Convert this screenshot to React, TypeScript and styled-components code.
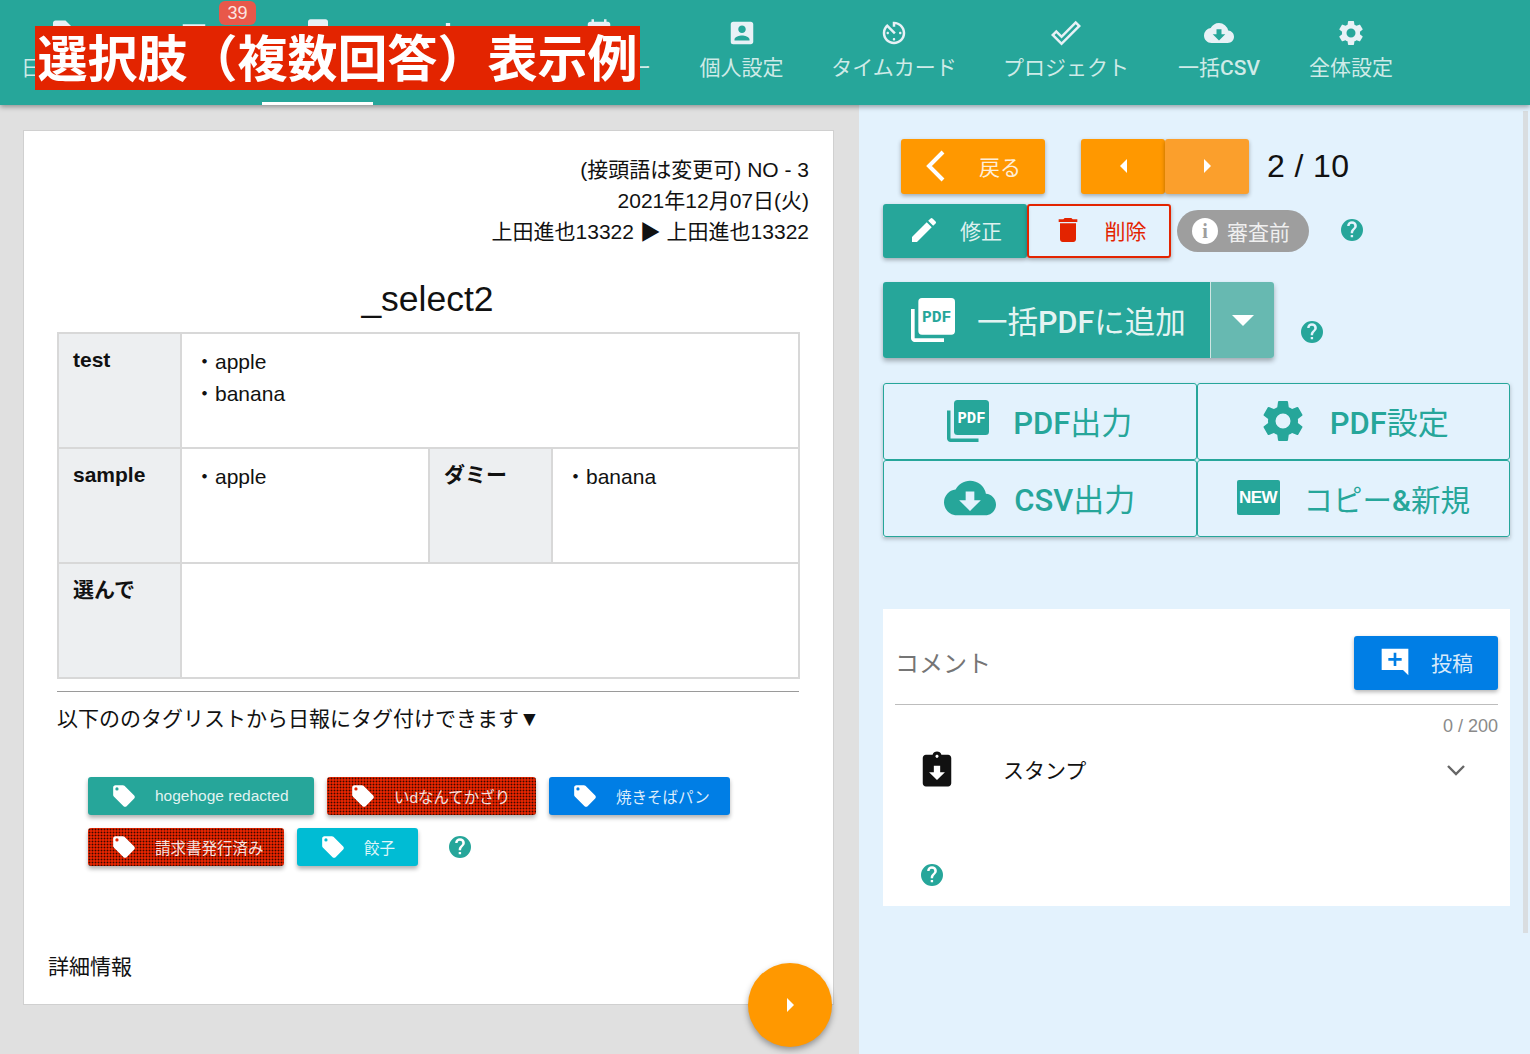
import React from "react";
import styled, { createGlobalStyle } from "styled-components";

const TEAL = "#26a69a";
const ORANGE = "#ff9800";
const RED = "#e32400";
const BLUE = "#007ee5";
const ICON = "#e8f1f6";
const CJK = `"Liberation Sans", "Noto Sans CJK JP", sans-serif`;

const GlobalStyle = createGlobalStyle`
  html, body {
    margin: 0;
    padding: 0;
    height: 100%;
    overflow: hidden;
    font-family: ${CJK};
    color: #111;
  }
  * { box-sizing: border-box; }
`;

const Glyph = ({ size, color, d }: { size: number; color: string; d: string }) => (
  <svg width={size} height={size} viewBox="0 0 24 24">
    <path fill={color} d={d} />
  </svg>
);

const SolidPdf = ({ size, color, knock }: { size: number; color: string; knock: string }) => (
  <svg width={size} height={size} viewBox="0 0 24 24">
    <path fill={color} d="M2 6H0v16c0 1.100.9 2 2 2h16v-2H2V6z" />
    <rect x="4" y="0" width="20" height="20" rx="2" fill={color} />
    <text x="14" y="13" fontSize="9" fontWeight="700" textAnchor="middle" textLength="16" lengthAdjust="spacingAndGlyphs" fill={knock} fontFamily="Liberation Mono, monospace">PDF</text>
  </svg>
);

const GEAR = "M19.14 12.94c.04-.3.06-.61.06-.94s-.02-.64-.07-.94l2.03-1.58a.5.5 0 0 0 .12-.61l-1.92-3.32a.5.5 0 0 0-.59-.22l-2.39.96a7 7 0 0 0-1.62-.94l-.36-2.54a.48.48 0 0 0-.48-.41h-3.84a.47.47 0 0 0-.47.41l-.36 2.54c-.59.24-1.13.57-1.62.94l-2.39-.96a.5.5 0 0 0-.59.22L2.74 8.87a.48.48 0 0 0 .12.61l2.03 1.58c-.05.3-.09.63-.09.94s.02.64.07.94l-2.03 1.58a.5.5 0 0 0-.12.61l1.92 3.32c.12.22.37.29.59.22l2.39-.96c.5.38 1.03.7 1.62.94l.36 2.54c.05.24.24.41.48.41h3.84c.24 0 .44-.17.47-.41l.36-2.54c.59-.24 1.13-.56 1.62-.94l2.39.96c.22.08.47 0 .59-.22l1.92-3.32a.47.47 0 0 0-.12-.61l-2.01-1.58zM12 15.6a3.6 3.6 0 1 1 0-7.2 3.6 3.6 0 0 1 0 7.2z";
const CLOUD = "M19.35 10.04A7.49 7.49 0 0 0 12 4C9.11 4 6.6 5.64 5.35 8.04A5.994 5.994 0 0 0 0 14c0 3.31 2.69 6 6 6h13c2.76 0 5-2.24 5-5 0-2.64-2.05-4.78-4.65-4.96zM17 13l-5 5-5-5h3V9h4v4h3z";
const ACCOUNT = "M3 5v14a2 2 0 0 0 2 2h14c1.100 0 2-.9 2-2V5c0-1.100-.9-2-2-2H5a2 2 0 0 0-2 2zm12 4c0 1.660-1.340 3-3 3s-3-1.340-3-3 1.340-3 3-3 3 1.340 3 3zm-9 8c0-2 4-3.100 6-3.100s6 1.100 6 3.100v1H6v-1z";
const TIMER = "M11 17c0 .55.45 1 1 1s1-.45 1-1-.45-1-1-1-1 .45-1 1zm0-14v4h2V5.080c3.390.490 6 3.390 6 6.920 0 3.870-3.130 7-7 7s-7-3.130-7-7c0-1.680.590-3.220 1.580-4.420L12 13l1.410-1.410-6.800-6.800v.020C4.420 6.450 3 9.050 3 12c0 4.970 4.020 9 9 9 4.970 0 9-4.030 9-9s-4.030-9-9-9h-1zm7 9c0-.55-.45-1-1-1s-1 .45-1 1 .45 1 1 1 1-.45 1-1zM6 12c0 .55.45 1 1 1s1-.45 1-1-.45-1-1-1-1 .45-1 1z";
const DONE = "M19.77 5.030l1.400 1.400L8.430 19.170l-5.600-5.600 1.400-1.400 4.200 4.200L19.770 5.03m0-2.830L8.43 13.540l-4.200-4.200L0 13.570 8.430 22 24 6.430 19.770 2.200z";
const FILE = "M14 2H6c-1.100 0-2 .9-2 2v16c0 1.100.9 2 2 2h12c1.100 0 2-.9 2-2V8l-6-6z";
const LIST = "M3 5h18v14H3z";
const BOARD = "M6 1h12c1.100 0 2 .9 2 2v18c0 1.100-.9 2-2 2H6c-1.100 0-2-.9-2-2V3c0-1.100.9-2 2-2z";
const BARS = "M10.300 4h3.400v16h-3.400z";
const CALENDAR = "M19 3h-1V1h-2v2H8V1H6v2H5c-1.110 0-1.990.9-1.990 2L3 19a2 2 0 0 0 2 2h14c1.100 0 2-.9 2-2V5c0-1.100-.9-2-2-2z";

const TagIcon = ({ knock }: { knock: string }) => (
  <svg width="26" height="26" viewBox="0 0 24 24">
    <path
      fill="#fff"
      d="M21.41 11.58l-9-9C12.05 2.22 11.55 2 11 2H4c-1.1 0-2 .9-2 2v7c0 .55.22 1.05.59 1.42l9 9c.36.36.86.58 1.41.58s1.05-.22 1.41-.59l7-7c.37-.36.59-.86.59-1.41s-.23-1.06-.59-1.42z"
    />
    <circle cx="5.5" cy="5.5" r="1.5" fill={knock} />
  </svg>
);

const Help = ({ size = 22 }: { size?: number }) => (
  <svg width={size} height={size} viewBox="0 0 24 24">
    <path
      fill={TEAL}
      d="M12 0a12 12 0 1 0 0 24 12 12 0 0 0 0-24zm1.2 20h-2.6v-2.6h2.6V20zm2.7-9.3l-1.2 1.2c-1 1-1.5 1.8-1.5 3.6h-2.6v-.7c0-1.4.5-2.7 1.5-3.7l1.6-1.6c.5-.5.8-1.1.8-1.8a2.6 2.6 0 0 0-5.2 0H6.7a5.3 5.3 0 0 1 10.6 0c0 1.200-.5 2.200-1.400 3z"
    />
  </svg>
);

const Header = styled.header`
  position: relative;
  z-index: 2;
  height: 105px;
  background: ${TEAL};
  box-shadow: 0 2px 5px rgba(0, 0, 0, 0.35);
`;

const Nav = styled.nav`
  display: flex;
  height: 100%;
`;

const Tab = styled.div<{ $width: number; $active?: boolean }>`
  position: relative;
  flex: none;
  width: ${(p) => p.$width}px;
  padding-top: 18px;
  display: flex;
  flex-direction: column;
  align-items: center;
  gap: 8px;
  color: rgba(255, 255, 255, 0.78);
  font-size: 21px;
  line-height: 24px;
  white-space: nowrap;
  border-bottom: ${(p) => (p.$active ? "3px solid #fff" : "none")};
`;

const TabIcon = styled.div`
  width: 30px;
  height: 30px;
  display: flex;
  align-items: center;
  justify-content: center;
`;

const Latin = styled.span`
  font-family: Roboto, sans-serif;
  font-weight: 500;
`;

const Badge = styled.span`
  position: absolute;
  top: 1px;
  left: 93px;
  width: 37px;
  height: 24px;
  border-radius: 6px;
  background: #e8584a;
  color: rgba(255, 255, 255, 0.85);
  font-size: 18px;
  line-height: 24px;
  text-align: center;
`;

const Banner = styled.div`
  position: absolute;
  left: 35px;
  top: 26px;
  width: 605px;
  height: 64px;
  background: ${RED};
  color: #fff;
  font-size: 50px;
  font-weight: 700;
  line-height: 68px;
  text-align: center;
  white-space: nowrap;
  overflow: hidden;
`;

const Body = styled.div`
  display: flex;
  height: 949px;
`;

const Left = styled.main`
  position: relative;
  width: 859px;
  flex: none;
  padding: 25px 25px 0 23px;
  background: #e0e0e0;
`;

const Sheet = styled.section`
  height: 875px;
  padding: 23px 24px 0 33px;
  background: #fff;
  border: 1px solid #d0d0d0;
`;

const MetaLine = styled.div`
  text-align: right;
  font-size: 21px;
  line-height: 31px;
`;

const Title = styled.h1`
  margin: 30px 0 11px;
  text-align: center;
  font-size: 35.5px;
  line-height: 44px;
  font-weight: 400;
  padding-right: 11px;
`;

const Report = styled.table`
  width: 741px;
  height: 347px;
  border-collapse: collapse;
  table-layout: fixed;
  font-size: 21px;
`;

const Column = styled.col<{ $width: number }>`
  width: ${(p) => p.$width}px;
`;

const Th = styled.th`
  height: 115px;
  padding: 14px 14px 0;
  vertical-align: top;
  text-align: left;
  line-height: 24px;
  background: #edeff1;
  border: 2px solid #d8d8d8;
`;

const Td = styled.td`
  padding: 12px 12px 0;
  vertical-align: top;
  border: 2px solid #d8d8d8;
`;

const Choice = styled.div`
  line-height: 32px;
`;

const Rule = styled.hr`
  width: 742px;
  margin: 12px 0 0;
  border: none;
  border-top: 1px solid #9a9a9a;
`;

const TagHint = styled.p`
  margin: 14px 0 0;
  font-size: 21px;
  line-height: 26px;
`;

const TagList = styled.div`
  display: flex;
  flex-wrap: wrap;
  align-items: center;
  gap: 13px;
  width: 660px;
  margin: 45px 0 0 31px;
`;

const TagButton = styled.div<{ $width: number; $color: string; $dotted?: boolean }>`
  width: ${(p) => p.$width}px;
  height: 38px;
  display: flex;
  align-items: center;
  gap: 18px;
  padding: 0 0 1px 23px;
  border-radius: 3px;
  background-color: ${(p) => p.$color};
  background-image: ${(p) =>
    p.$dotted ? "radial-gradient(rgba(0, 0, 0, 0.75) 0.8px, transparent 1.1px)" : "none"};
  background-size: 3px 3px;
  color: rgba(255, 255, 255, 0.88);
  font-size: 15.5px;
  white-space: nowrap;
  box-shadow: 0 3px 4px rgba(0, 0, 0, 0.3);
`;

const TagHelp = styled.div`
  display: flex;
  margin-left: 18px;
`;

const Details = styled.div`
  margin: 88px 0 0 -9px;
  font-size: 21px;
  line-height: 26px;
`;

const Fab = styled.div`
  position: absolute;
  left: 748px;
  top: 858px;
  width: 84px;
  height: 84px;
  display: flex;
  align-items: center;
  justify-content: center;
  border-radius: 50%;
  background: ${ORANGE};
  box-shadow: 0 3px 6px rgba(0, 0, 0, 0.35);
`;

const Caret = styled.span<{ $dir: "left" | "right" | "down"; $size: number }>`
  width: 0;
  height: 0;
  border-style: solid;
  border-color: transparent;
  border-width: ${(p) => p.$size}px;
  ${(p) =>
    p.$dir === "left"
      ? `border-left-width: 0; border-right-color: #fff;`
      : p.$dir === "right"
        ? `border-right-width: 0; border-left-color: #fff;`
        : `border-bottom-width: 0; border-top-color: #fff;`}
`;

const Right = styled.aside`
  position: relative;
  flex: 1;
  padding: 34px 20px 0 24px;
  background: #e3f2fd;
`;

const ScrollThumb = styled.div`
  position: absolute;
  top: 6px;
  right: 2px;
  width: 5px;
  height: 822px;
  background: #d9dde0;
`;

const PagerRow = styled.div`
  display: flex;
  align-items: center;
  height: 55px;
  margin-left: 18px;
`;

const FlatButton = styled.div<{ $width: number; $height?: number; $bg?: string; $fg?: string; $outline?: string; $gap?: number }>`
  width: ${(p) => p.$width}px;
  height: ${(p) => p.$height ?? 54}px;
  flex: none;
  display: flex;
  align-items: center;
  justify-content: center;
  gap: ${(p) => p.$gap ?? 0}px;
  padding-bottom: 2px;
  background: ${(p) => p.$bg ?? "transparent"};
  color: ${(p) => p.$fg ?? "rgba(255, 255, 255, 0.85)"};
  border: ${(p) => (p.$outline ? `2px solid ${p.$outline}` : "none")};
  border-radius: 3px;
  font-size: 21px;
  white-space: nowrap;
  box-shadow: 0 2px 4px rgba(0, 0, 0, 0.3);
`;

const ArrowGroup = styled.div`
  display: flex;
  margin-left: 36px;
`;

const PageCount = styled.span`
  margin-left: 18px;
  font-size: 32px;
  letter-spacing: 0.4px;
`;

const ActionRow = styled.div`
  display: flex;
  align-items: center;
  margin-top: 10px;
`;

const StatusPill = styled.div`
  width: 132px;
  height: 42px;
  margin-left: 6px;
  display: flex;
  align-items: center;
  gap: 9px;
  padding-left: 15px;
  border-radius: 21px;
  background: #9e9e9e;
  color: rgba(255, 255, 255, 0.85);
  font-size: 21px;
`;

const InfoDot = styled.span`
  width: 26px;
  height: 26px;
  border-radius: 50%;
  background: #fff;
  color: #9e9e9e;
  font-family: "Liberation Serif", serif;
  font-weight: 700;
  font-size: 20px;
  line-height: 26px;
  text-align: center;
`;

const HelpSlot = styled.div<{ $left: number; $top?: number }>`
  display: flex;
  margin-left: ${(p) => p.$left}px;
  margin-top: ${(p) => p.$top ?? 0}px;
`;

const BulkRow = styled.div`
  display: flex;
  align-items: center;
  margin-top: 24px;
`;

const BulkButton = styled.div`
  display: flex;
  height: 76px;
  border-radius: 3px;
  color: rgba(255, 255, 255, 0.9);
  box-shadow: 0 3px 5px rgba(0, 0, 0, 0.3);
  overflow: hidden;
`;

const BulkMain = styled.div`
  width: 327px;
  display: flex;
  align-items: center;
  gap: 22px;
  padding-left: 28px;
  background: ${TEAL};
  font-size: 30.500px;
`;

const BulkCaret = styled.div`
  width: 64px;
  display: flex;
  align-items: center;
  justify-content: center;
  background: #67b9b1;
  border-left: 1px solid #cfe6e3;
`;

const OutputGrid = styled.div`
  display: grid;
  grid-template-columns: repeat(2, 1fr);
  width: 627px;
  margin-top: 25px;
  box-shadow: 0 2px 4px rgba(0, 0, 0, 0.25);
`;

const OutputCell = styled.div<{ $gap: number }>`
  height: 77px;
  display: flex;
  align-items: center;
  justify-content: center;
  gap: ${(p) => p.$gap}px;
  padding-bottom: 2px;
  border: 1.5px solid ${TEAL};
  border-radius: 3px;
  color: ${TEAL};
  font-size: 31px;
`;

const CellLabel = styled.span<{ $size?: number }>`
  font-size: ${(p) => p.$size ?? 31}px;
  white-space: nowrap;
`;

const NewMark = styled.span`
  width: 43px;
  height: 35px;
  display: flex;
  align-items: center;
  justify-content: center;
  border-radius: 2px;
  background: ${TEAL};
  color: #fff;
  font-size: 17px;
  font-weight: 700;
  letter-spacing: -0.5px;
  font-family: "Liberation Sans", sans-serif;
`;

const CommentCard = styled.section`
  width: 627px;
  height: 297px;
  margin-top: 72px;
  padding: 27px 12px 0;
  background: #fff;
`;

const CommentHead = styled.div`
  display: flex;
  align-items: center;
  justify-content: space-between;
  height: 69px;
  padding-bottom: 14px;
  border-bottom: 1px solid #bdbdbd;
  color: #757575;
  font-size: 24px;
`;

const CommentLabel = styled.span`
  padding-bottom: 4px;
`;

const Counter = styled.div`
  margin-top: 10px;
  text-align: right;
  color: #8a8a8a;
  font-size: 18px;
  line-height: 22px;
`;

const StampRow = styled.div`
  display: flex;
  align-items: center;
  margin: 10px 0 0 23px;
  height: 44px;
  font-size: 21px;
`;

const StampLabel = styled.span`
  flex: 1;
  margin-left: 47px;
`;

const StampChevron = styled.svg`
  margin: 3px 32px 0 0;
`;

const CommentHelp = styled.div`
  display: flex;
  margin: 73px 0 0 26px;
`;

const tabs = [
  { width: 126, icon: <Glyph size={36} color={ICON} d={FILE} />, label: "日報作成" },
  { width: 136, icon: <Glyph size={36} color={ICON} d={LIST} />, badge: "39" },
  { width: 111, icon: <Glyph size={36} color={ICON} d={BOARD} />, active: true },
  { width: 149, icon: <Glyph size={36} color={ICON} d={BARS} /> },
  { width: 153, icon: <Glyph size={36} color={ICON} d={CALENDAR} />, label: "カレンダー" },
  { width: 133, icon: <Glyph size={36} color={ICON} d={ACCOUNT} />, label: "個人設定" },
  { width: 172, icon: <Glyph size={36} color={ICON} d={TIMER} />, label: "タイムカード" },
  { width: 172, icon: <Glyph size={36} color={ICON} d={DONE} />, label: "プロジェクト" },
  { width: 134, icon: <Glyph size={38} color={ICON} d={CLOUD} />, label: <span>一括<Latin>CSV</Latin></span> },
  { width: 130, icon: <Glyph size={36} color={ICON} d={GEAR} />, label: "全体設定" },
];

const tags = [
  { label: "hogehoge redacted", width: 226, color: TEAL },
  { label: "いdなんてかざり", width: 209, color: RED, dotted: true },
  { label: "焼きそばパン", width: 181, color: BLUE },
  { label: "請求書発行済み", width: 196, color: RED, dotted: true },
  { label: "餃子", width: 121, color: "#00bcd4" },
];

export default function App() {
  return (
    <>
      <GlobalStyle />
      <Header>
        <Nav>
          {tabs.map((tab, i) => (
            <Tab key={i} $width={tab.width} $active={tab.active}>
              {tab.badge && <Badge>{tab.badge}</Badge>}
              <TabIcon>{tab.icon}</TabIcon>
              {tab.label}
            </Tab>
          ))}
        </Nav>
        <Banner>選択肢（複数回答）表示例</Banner>
      </Header>
      <Body>
        <Left>
          <Sheet>
            <MetaLine>(接頭語は変更可) NO - 3</MetaLine>
            <MetaLine>2021年12月07日(火)</MetaLine>
            <MetaLine>上田進也13322 ▶ 上田進也13322</MetaLine>
            <Title>_select2</Title>
            <Report>
              <colgroup>
                <Column $width={123} />
                <Column $width={248} />
                <Column $width={123} />
                <Column $width={247} />
              </colgroup>
              <tbody>
                <tr>
                  <Th>test</Th>
                  <Td colSpan={3}>
                    <Choice>・apple</Choice>
                    <Choice>・banana</Choice>
                  </Td>
                </tr>
                <tr>
                  <Th>sample</Th>
                  <Td><Choice>・apple</Choice></Td>
                  <Th>ダミー</Th>
                  <Td><Choice>・banana</Choice></Td>
                </tr>
                <tr>
                  <Th>選んで</Th>
                  <Td colSpan={3} />
                </tr>
              </tbody>
            </Report>
            <Rule />
            <TagHint>以下ののタグリストから日報にタグ付けできます▼</TagHint>
            <TagList>
              {tags.map((tag) => (
                <TagButton key={tag.label} $width={tag.width} $color={tag.color} $dotted={tag.dotted}>
                  <TagIcon knock={tag.color} />
                  {tag.label}
                </TagButton>
              ))}
              <TagHelp><Help /></TagHelp>
            </TagList>
            <Details>詳細情報</Details>
          </Sheet>
          <Fab><Caret $dir="right" $size={7} /></Fab>
        </Left>
        <Right>
          <ScrollThumb />
          <PagerRow>
            <FlatButton $width={144} $height={55} $bg={ORANGE} $gap={34}>
              <svg width="20" height="32" viewBox="0 0 20 32">
                <path d="M18 2L4 16l14 14" fill="none" stroke="#fff" strokeWidth="4" />
              </svg>
              戻る
            </FlatButton>
            <ArrowGroup>
              <FlatButton $width={84} $height={55} $bg={ORANGE}><Caret $dir="left" $size={7} /></FlatButton>
              <FlatButton $width={84} $height={55} $bg="#fb9f2c"><Caret $dir="right" $size={7} /></FlatButton>
            </ArrowGroup>
            <PageCount>2 / 10</PageCount>
          </PagerRow>
          <ActionRow>
            <FlatButton $width={144} $bg={TEAL} $gap={20}>
              <svg width="32" height="32" viewBox="0 0 24 24">
                <path fill="#fff" d="M3 17.25V21h3.75L17.81 9.94l-3.75-3.75L3 17.250zM20.710 7.040a1 1 0 0 0 0-1.410l-2.340-2.340a1 1 0 0 0-1.410 0l-1.830 1.830 3.750 3.750 1.830-1.830z" />
              </svg>
              修正
            </FlatButton>
            <FlatButton $width={144} $fg={RED} $outline={RED} $gap={21}>
              <svg width="32" height="32" viewBox="0 0 24 24">
                <path fill={RED} d="M6 19c0 1.100.9 2 2 2h8c1.100 0 2-.9 2-2V7H6v12zM19 4h-3.500l-1-1h-5l-1 1H5v2h14V4z" />
              </svg>
              削除
            </FlatButton>
            <StatusPill><InfoDot>i</InfoDot>審査前</StatusPill>
            <HelpSlot $left={32} $top={-2}><Help /></HelpSlot>
          </ActionRow>
          <BulkRow>
            <BulkButton>
              <BulkMain>
                <SolidPdf size={44} color="#fff" knock={TEAL} />
                <span>一括<Latin>PDF</Latin>に追加</span>
              </BulkMain>
              <BulkCaret><Caret $dir="down" $size={11} /></BulkCaret>
            </BulkButton>
            <HelpSlot $left={27} $top={24}><Help /></HelpSlot>
          </BulkRow>
          <OutputGrid>
            <OutputCell $gap={24}>
              <SolidPdf size={42} color={TEAL} knock="#fff" />
              <CellLabel><Latin>PDF</Latin>出力</CellLabel>
            </OutputCell>
            <OutputCell $gap={22}>
              <Glyph size={50} color={TEAL} d={GEAR} />
              <CellLabel><Latin>PDF</Latin>設定</CellLabel>
            </OutputCell>
            <OutputCell $gap={18}>
              <Glyph size={52} color={TEAL} d={CLOUD} />
              <CellLabel><Latin>CSV</Latin>出力</CellLabel>
            </OutputCell>
            <OutputCell $gap={24}>
              <NewMark>NEW</NewMark>
              <CellLabel $size={29.5}>コピー<Latin>&amp;</Latin>新規</CellLabel>
            </OutputCell>
          </OutputGrid>
          <CommentCard>
            <CommentHead>
              <CommentLabel>コメント</CommentLabel>
              <FlatButton $width={144} $bg={BLUE} $gap={20}>
                <svg width="32" height="32" viewBox="0 0 24 24">
                  <path fill="#fff" d="M2 2h20v15.500L22 22l-4-4H2V2zm9 3v4H7v2h4v4h2v-4h4V9h-4V5h-2z" fillRule="evenodd" />
                </svg>
                投稿
              </FlatButton>
            </CommentHead>
            <Counter>0 / 200</Counter>
            <StampRow>
              <svg width="38" height="38" viewBox="0 0 24 24">
                <path fill="#111" d="M19 3h-4.200C14.400 1.800 13.300 1 12 1s-2.400.8-2.800 2H5c-1.100 0-2 .9-2 2v16c0 1.100.9 2 2 2h14c1.100 0 2-.9 2-2V5c0-1.100-.9-2-2-2zm-7 0c.55 0 1 .45 1 1s-.45 1-1 1-1-.45-1-1 .45-1 1-1zm0 16l-5-5h3v-4h4v4h3l-5 5z" />
              </svg>
              <StampLabel>スタンプ</StampLabel>
              <StampChevron width="20" height="13" viewBox="0 0 20 13">
                <path d="M2 2l8 8 8-8" fill="none" stroke="#666" strokeWidth="2.400" />
              </StampChevron>
            </StampRow>
            <CommentHelp><Help /></CommentHelp>
          </CommentCard>
        </Right>
      </Body>
    </>
  );
}
